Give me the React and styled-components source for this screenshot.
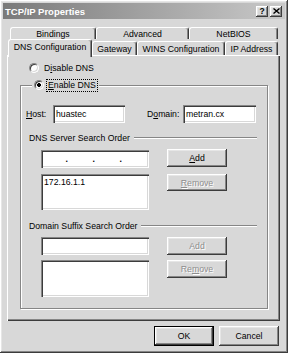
import styled, { createGlobalStyle } from "styled-components";

const GlobalStyle = createGlobalStyle`
  html, body {
    margin: 0;
    padding: 0;
    background: #d8d8d8;
  }
`;

const raised = `
  box-shadow: inset -1px -1px 0 #3c3c3c, inset 1px 1px 0 #ffffff,
    inset -2px -2px 0 #868686, inset 2px 2px 0 #e6e6e6;
`;

const sunken = `
  box-shadow: inset 1px 1px 0 #868686, inset 2px 2px 0 #3c3c3c,
    inset -1px -1px 0 #ffffff, inset -2px -2px 0 #d8d8d8;
`;

const Window = styled.div`
  width: 288px;
  height: 353px;
  box-sizing: border-box;
  padding: 3px;
  background: #d8d8d8;
  ${raised}
  display: flex;
  flex-direction: column;
  font-family: "Liberation Sans", Arial, sans-serif;
  font-size: 8.7px;
  color: #000;
`;

const TitleBar = styled.div`
  height: 16px;
  display: flex;
  align-items: center;
  padding: 0 3px 0 2px;
  background: linear-gradient(to right, #7a7a7a, #c9c9c9);
  color: #fff;
  font-weight: bold;
  font-size: 9.5px;

  .title {
    flex: 1;
  }
`;

const TitleButton = styled.div`
  width: 12px;
  height: 11px;
  margin-left: ${(p) => p.$gap}px;
  background: #d8d8d8;
  ${raised}
  display: flex;
  align-items: center;
  justify-content: center;
  color: #000;
  font-size: 8.5px;
  font-weight: bold;
  line-height: 1;
`;

const TabStrip = styled.div`
  margin: 8px 0 0 4px;
  display: flex;
  flex-direction: column;
`;

const TabRow = styled.div`
  display: flex;
  align-items: flex-end;
  height: ${(p) => p.$h}px;
  padding-left: ${(p) => p.$indent}px;
`;

const Tab = styled.div`
  box-sizing: border-box;
  width: ${(p) => p.$w}px;
  height: ${(p) => (p.$active ? 18 : p.$back ? 12 : 14)}px;
  display: flex;
  align-items: center;
  justify-content: center;
  padding-bottom: ${(p) => (p.$active ? 3 : 0)}px;
  background: #d8d8d8;
  border: 1px solid;
  border-color: #ffffff #3c3c3c transparent #ffffff;
  border-bottom: none;
  border-radius: 3px 3px 0 0;
  box-shadow: inset -1px 0 0 #868686;
  white-space: nowrap;
  position: ${(p) => (p.$active ? "relative" : "static")};
  z-index: ${(p) => (p.$active ? 1 : 0)};
  margin-bottom: ${(p) => (p.$active ? -2 : 0)}px;
`;

const Panel = styled.div`
  margin-left: 4px;
  width: 273px;
  height: 266px;
  box-sizing: border-box;
  padding: 7px 12px 0 13px;
  box-shadow: inset 1px 1px 0 #ffffff, inset -1px -1px 0 #3c3c3c,
    inset -2px -2px 0 #868686;
`;

const RadioRow = styled.span`
  display: inline-flex;
  align-items: center;
  height: ${(p) => p.$h || 12}px;
  margin-left: ${(p) => p.$indent || 0}px;
`;

const Radio = styled.span`
  box-sizing: border-box;
  width: 10px;
  height: 10px;
  border-radius: 50%;
  border: 1px solid;
  border-color: #868686 #ffffff #ffffff #868686;
  box-shadow: inset 1px 1px 0 #3c3c3c, inset -1px -1px 0 #d8d8d8;
  background: ${(p) =>
    p.$checked
      ? "radial-gradient(circle, #000 0 1.6px, #fff 2.2px)"
      : "#fff"};
`;

const RadioLabel = styled.span`
  margin-left: ${(p) => (p.$focus ? 3 : 4)}px;
  padding: 0 1px;
  line-height: 11px;
  outline: ${(p) => (p.$focus ? "1px dotted #000" : "none")};
`;

const GroupBox = styled.fieldset`
  margin: 3px 0 0;
  padding: 0 10px 11px 5px;
  min-inline-size: 0;
  border: 1px solid #868686;
  box-shadow: inset 1px 1px 0 #fff, 1px 1px 0 #fff;
`;

const Legend = styled.legend`
  margin-left: 6px;
  padding: 0 2px 0 2px;
  height: 14px;
  background: #d8d8d8;
`;

const FieldRow = styled.div`
  display: flex;
  align-items: center;
  height: 18px;
  margin-top: 13px;
`;

const Label = styled.span`
  width: ${(p) => p.$w}px;
  margin-left: ${(p) => p.$gap || 0}px;
  flex: none;
`;

const TextBox = styled.div`
  box-sizing: border-box;
  width: ${(p) => p.$w}px;
  height: ${(p) => p.$h || 18}px;
  margin-top: ${(p) => p.$top || 0}px;
  padding: ${(p) => (p.$list ? "3px 3px" : "0 3px")};
  background: #fff;
  ${sunken}
  display: flex;
  align-items: ${(p) => (p.$list ? "flex-start" : "center")};
`;

const IpField = styled(TextBox)`
  padding: 0;
`;

const IpSeg = styled.span`
  flex: 0 0 27px;
  text-align: right;
  font-weight: bold;
`;

const SectionHeader = styled.div`
  display: flex;
  align-items: center;
  gap: 4px;
  height: 12px;
  margin-top: ${(p) => p.$top}px;
  padding-left: 3px;
`;

const Rule = styled.span`
  flex: 1;
  height: 0;
  border-top: 1px solid #868686;
  border-bottom: 1px solid #fff;
`;

const EditorGrid = styled.div`
  display: grid;
  grid-template-columns: 108px 60px;
  column-gap: 18px;
  row-gap: ${(p) => p.$gap}px;
  align-items: start;
  margin: 5px 0 0 15px;
`;

const Button = styled.div`
  box-sizing: border-box;
  width: 60px;
  height: ${(p) => p.$h || 18}px;
  display: flex;
  align-items: center;
  justify-content: center;
  background: #d8d8d8;
  ${raised}
  border: ${(p) => (p.$default ? "1px solid #000" : "none")};
  color: ${(p) => (p.$disabled ? "#8e8e8e" : "#000")};
  text-shadow: ${(p) => (p.$disabled ? "1px 1px 0 #fff" : "none")};
`;

const Footer = styled.div`
  display: flex;
  justify-content: flex-end;
  gap: 5px;
  margin-top: 5px;
  padding-right: 6px;
`;

const backTabs = [
  { name: "Bindings", w: 86 },
  { name: "Advanced", w: 93 },
  { name: "NetBIOS", w: 89 },
];

const frontTabs = [
  { name: "DNS Configuration", w: 84, active: true },
  { name: "Gateway", w: 45 },
  { name: "WINS Configuration", w: 88 },
  { name: "IP Address", w: 53 },
];

export default function App() {
  return (
    <>
      <GlobalStyle />
      <Window>
        <TitleBar>
          <span className="title">TCP/IP Properties</span>
          <TitleButton $gap={0}>?</TitleButton>
          <TitleButton $gap={2}>
            <svg width="7" height="6" viewBox="0 0 7 6">
              <path d="M0.5 0.5 L6.5 5.5 M6.5 0.5 L0.5 5.5" stroke="#000" strokeWidth="1.4" />
            </svg>
          </TitleButton>
        </TitleBar>

        <TabStrip>
          <TabRow $h={12} $indent={3}>
            {backTabs.map((t) => (
              <Tab key={t.name} $w={t.w} $back>
                {t.name}
              </Tab>
            ))}
          </TabRow>
          <TabRow $h={16} $indent={1}>
            {frontTabs.map((t) => (
              <Tab key={t.name} $w={t.w} $active={t.active}>
                {t.name}
              </Tab>
            ))}
          </TabRow>
        </TabStrip>

        <Panel>
          <RadioRow $indent={9}>
            <Radio />
            <RadioLabel>
              D<u>i</u>sable DNS
            </RadioLabel>
          </RadioRow>

          <GroupBox>
            <Legend>
              <RadioRow $h={14}>
                <Radio $checked />
                <RadioLabel $focus>
                  <u>E</u>nable DNS
                </RadioLabel>
              </RadioRow>
            </Legend>

            <FieldRow>
              <Label $w={27}>
                <u>H</u>ost:
              </Label>
              <TextBox $w={72}>huastec</TextBox>
              <Label $w={36} $gap={22}>
                D<u>o</u>main:
              </Label>
              <TextBox $w={73}>metran.cx</TextBox>
            </FieldRow>

            <SectionHeader $top={9}>
              DNS Server Search Order
              <Rule />
            </SectionHeader>
            <EditorGrid $gap={6}>
              <IpField $w={108} $top={1}>
                <IpSeg>.</IpSeg>
                <IpSeg>.</IpSeg>
                <IpSeg>.</IpSeg>
              </IpField>
              <Button>
                <span>
                  <u>A</u>dd
                </span>
              </Button>
              <TextBox $w={108} $h={36} $list>
                172.16.1.1
              </TextBox>
              <Button $h={17} $disabled>
                <span>
                  <u>R</u>emove
                </span>
              </Button>
            </EditorGrid>

            <SectionHeader $top={10}>
              Domain Suffix Search Order
              <Rule />
            </SectionHeader>
            <EditorGrid $gap={5}>
              <TextBox $w={108} />
              <Button $disabled>Add</Button>
              <TextBox $w={108} $h={37} $list />
              <Button $disabled>
                <span>
                  Re<u>m</u>ove
                </span>
              </Button>
            </EditorGrid>
          </GroupBox>
        </Panel>

        <Footer>
          <Button $h={20} $default>
            OK
          </Button>
          <Button $h={20}>Cancel</Button>
        </Footer>
      </Window>
    </>
  );
}
